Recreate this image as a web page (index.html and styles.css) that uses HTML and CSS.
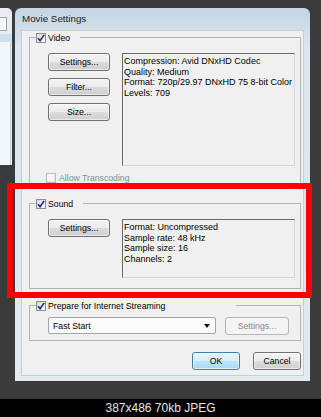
FILE: index.html
```html
<!DOCTYPE html>
<html lang="en">
<head>
  <meta charset="UTF-8">
  <meta name="viewport" content="width=device-width, initial-scale=1.0">
  <title>Movie Settings</title>
  <link rel="stylesheet" href="styles.css">
</head>
<body>

  <div class="desk">
    <div class="behind">
      <div class="behind-box"></div>
      <div class="behind-band"></div>
      <div class="behind-pane"></div>
    </div>

    <div class="dialog">
      <div class="titlebar">Movie Settings</div>

      <div class="client">
        <fieldset class="group">
          <legend class="group-title">
            <span class="check"><svg class="tick" viewBox="0 0 8 8"><path d="M1 4.2 L3.1 6.6 L7.2 0.9"/></svg></span>Video
          </legend>
          <div class="group-body">
            <div class="row">
              <div class="btn-col">
                <button class="btn">Settings...</button>
                <button class="btn">Filter...</button>
                <button class="btn">Size...</button>
              </div>
              <div class="info info-video">
                <div>Compression: Avid DNxHD Codec</div>
                <div>Quality: Medium</div>
                <div>Format: 720p/29.97 DNxHD 75 8-bit Color</div>
                <div>Levels: 709</div>
              </div>
            </div>
            <div class="option disabled"><span class="check off"></span>Allow Transcoding</div>
          </div>
        </fieldset>

        <fieldset class="group group-sound">
          <legend class="group-title">
            <span class="check"><svg class="tick" viewBox="0 0 8 8"><path d="M1 4.2 L3.1 6.6 L7.2 0.9"/></svg></span>Sound
          </legend>
          <div class="group-body body-sound">
            <div class="row">
              <div class="btn-col">
                <button class="btn">Settings...</button>
              </div>
              <div class="info info-sound">
                <div>Format: Uncompressed</div>
                <div>Sample rate: 48 kHz</div>
                <div>Sample size: 16</div>
                <div>Channels: 2</div>
              </div>
            </div>
          </div>
        </fieldset>

        <fieldset class="group group-stream">
          <legend class="group-title wide">
            <span class="check"><svg class="tick" viewBox="0 0 8 8"><path d="M1 4.2 L3.1 6.6 L7.2 0.9"/></svg></span>Prepare for Internet Streaming
          </legend>
          <div class="group-body body-stream">
            <div class="row row-stream">
              <div class="combo">Fast Start<span class="caret"></span></div>
              <button class="btn btn-wide" disabled>Settings...</button>
            </div>
          </div>
        </fieldset>

        <div class="footer">
          <button class="btn btn-footer btn-default">OK</button>
          <button class="btn btn-footer">Cancel</button>
        </div>
      </div>
    </div>
  </div>

  <div class="caption">387x486 70kb JPEG</div>

  <div class="highlight"></div>

</body>
</html>
```

FILE: styles.css
```css
body { margin: 0; width: 321px; height: 417px; overflow: hidden; position: relative; background-color: #3b3b3b; font-family: "Liberation Sans", Arial, sans-serif; color: #000; }

.desk { height: 399px; display: flex; align-items: flex-start; }

/* piece of the window lying behind the dialog */
.behind { width: 12px; height: 157px; margin-top: 8px; background-color: #e6ecf1; border-radius: 0 5px 0 0; display: flex; flex-direction: column; }
.behind-box { width: 6px; height: 12px; margin-top: 9px; border: 1px solid #9ba7b2; border-left: none; background-color: #f7f9fb; }
.behind-band { height: 8px; margin-top: 3px; background-color: #cddff0; }
.behind-pane { flex: 1; margin-right: 1px; background-color: #f4f7f9; border-right: 1px solid #b8d1e6; }

.dialog { width: 295px; height: 373px; margin: 8px 0 0 3px; box-sizing: border-box; padding: 0 6px 5px; display: flex; flex-direction: column; background: linear-gradient(#c4d5e3, #dbe5ed 40px, #e3e9ef); border-radius: 6px 6px 0 0; }
.titlebar { height: 22px; line-height: 22px; padding-left: 1px; font-size: 9.8px; color: #1b1b1b; }

.client { flex: 1; box-sizing: border-box; padding: 1px 2px 5px 7px; background-color: #f0f0f0; border: 1px solid #c6cfd7; }

.group { margin: 0; padding: 0; border: 1px solid #b3b3b3; min-inline-size: 0; }
.group-sound { margin-top: 10px; }
.group-stream { margin-top: 11px; }
.group-title { margin-left: 6px; padding: 0 10px 0 0; height: 11px; display: flex; align-items: center; gap: 2px; font-size: 8.7px; }
.group-title.wide { padding-right: 71px; }

.check { width: 10px; height: 10px; box-sizing: border-box; display: inline-flex; align-items: center; justify-content: center; border: 1px solid #8e8f8f; background: linear-gradient(135deg, #d8d8d8, #fdfdfd); }
.check.off { border-color: #bcbcbc; background: #f6f6f6; box-shadow: inset -1px -1px 0 #d3eef0; }
.tick { width: 8px; height: 8px; fill: none; stroke: #1a2a84; stroke-width: 1.6; }

.group-body { padding: 10px 5px 4px 18px; }
.body-sound { padding-bottom: 10px; }
.body-stream { padding-top: 6px; padding-bottom: 5px; }

.row { display: flex; gap: 12px; align-items: flex-start; }
.row-stream { gap: 9px; }
.btn-col { width: 62px; display: flex; flex-direction: column; gap: 7px; }

.info { flex: 1; box-sizing: border-box; padding: 2px 1px; font-size: 9px; line-height: 10.5px; border-top: 1px solid #6a6a6a; border-left: 1px solid #6a6a6a; border-right: 1px solid #d6d6d6; border-bottom: 1px solid #d6d6d6; }
.info-video { height: 113px; }
.info-sound { height: 59px; }

.option { height: 11px; margin: 6px 0 0 -2px; display: flex; align-items: center; gap: 3px; font-size: 8.7px; }
.option.disabled { color: #8b8b8b; }

.btn { height: 18px; padding: 0; font-family: inherit; font-size: 8.7px; color: #000; border: 1px solid #707070; border-radius: 3px; background: linear-gradient(#f3f3f3, #ebebeb 50%, #dcdcdc 50%, #cfcfcf); box-shadow: inset 0 0 0 1px rgba(255, 255, 255, 0.55); }
.btn:disabled { color: #8a8a8a; border-color: #b2b6b8; background: #f4f4f4; box-shadow: none; }
.btn-wide { width: 64px; }
.btn-footer { width: 48px; }
.btn-default { border-color: #3c7fb1; background: linear-gradient(#e8f5fd, #d8effc 50%, #bee5fb 50%, #a9daf6); box-shadow: inset 0 0 0 1px rgba(255, 255, 255, 0.6); }

.combo { width: 168px; height: 17px; box-sizing: border-box; padding: 0 5px 0 4px; display: flex; align-items: center; justify-content: space-between; font-size: 8.7px; border: 1px solid #a5a5a5; border-radius: 2px; background-color: #fbfbfb; }
.caret { width: 0; height: 0; border-left: 3px solid transparent; border-right: 3px solid transparent; border-top: 4px solid #111; }

.footer { margin-top: 11px; display: flex; justify-content: flex-end; gap: 13px; }

.caption { height: 18px; line-height: 18px; background-color: #000; color: #e6e6e6; font-size: 12px; text-align: center; }

/* red marker drawn over the screenshot */
.highlight { position: absolute; left: 7px; top: 183px; width: 305px; height: 115px; box-sizing: border-box; border: 6px solid #f00; }
```
